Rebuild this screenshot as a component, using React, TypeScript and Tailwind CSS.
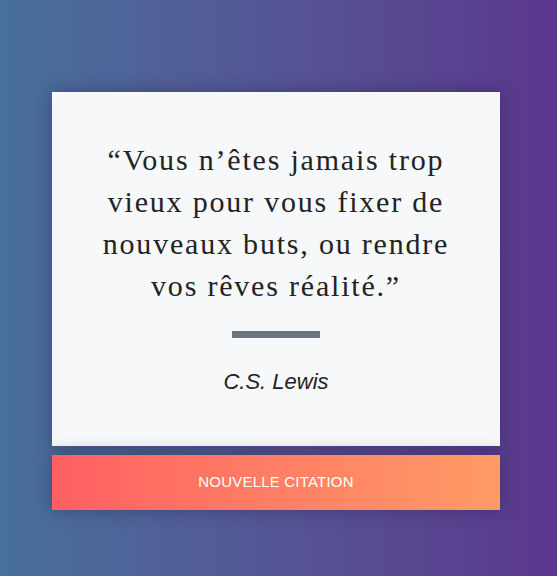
export default function App() {
  return (
    <div className="w-[557px] h-[576px] bg-gradient-to-r from-[#47709b] to-[#5a378d] pt-[92px] pl-[52px] flex flex-col items-start">
      <div className="w-[448px] shadow-[0_0_16px_rgba(40,30,80,0.45)]">
        <div className="bg-[#f7f8fa] h-[354px] flex flex-col items-center pt-[47px] px-[40px]">
          <p className="text-[30px] leading-[42px] text-[#232323] text-center tracking-[1.8px]" style={{ fontFamily: '"Liberation Serif", "Times New Roman", serif' }}>
            “Vous n’êtes jamais trop vieux pour vous fixer de nouveaux buts, ou rendre vos rêves réalité.”
          </p>
          <div className="w-[88px] h-[7px] bg-[#6c757d] mt-[24px]" />
          <p className="mt-[27px] text-[22px] italic text-[#222]" style={{ fontFamily: '"Liberation Sans", Arial, sans-serif' }}>
            C.S. Lewis
          </p>
        </div>
      </div>
      <button className="mt-[9px] w-[448px] h-[55px] bg-gradient-to-r from-[#ff5f62] to-[#ff9a66] text-white text-[15px] tracking-[0.2px] shadow-[0_0_16px_rgba(40,30,80,0.45)]" style={{ fontFamily: '"Liberation Sans", Arial, sans-serif' }}>
        NOUVELLE CITATION
      </button>
    </div>
  );
}
